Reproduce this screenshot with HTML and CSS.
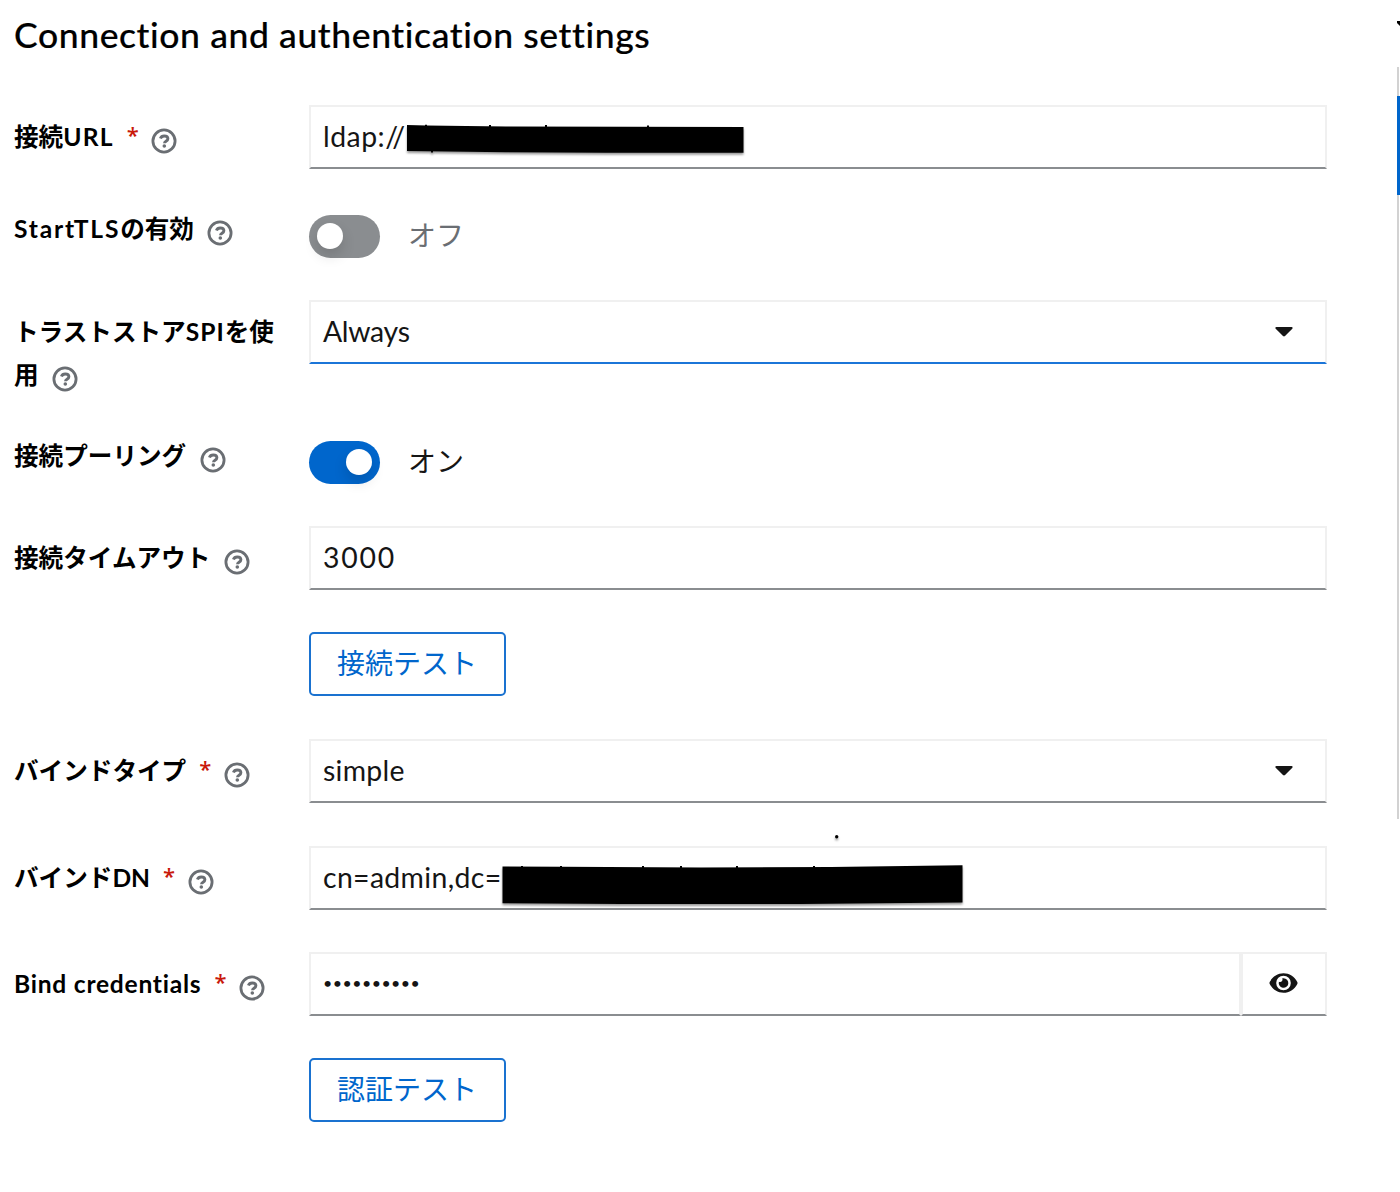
FILE: index.html
```html
<!DOCTYPE html>
<html lang="ja">
<head>
<meta charset="utf-8">
<title>Connection and authentication settings</title>
<link rel="stylesheet" href="styles.css">
</head>
<body>
<svg width="0" height="0" class="defs" aria-hidden="true">
  <symbol id="help" viewBox="0 0 26 26">
    <circle cx="13" cy="13" r="11.1" fill="none" stroke="#6a6e73" stroke-width="2.8"/>
    <path d="M9.4 10.5C10 8.9 11.4 8 13.2 8c2.1 0 3.7 1.1 3.7 2.8 0 2.5-3.4 2.5-3.4 4.4" fill="none" stroke="#6a6e73" stroke-width="2.9"/>
    <circle cx="13.3" cy="18" r="1.8" fill="#6a6e73"/>
  </symbol>
  <symbol id="caret" viewBox="0 0 18 10"><path d="M1.4 0h15.2c1 0 1.4 1 .7 1.7L10 9c-.6.6-1.4.6-2 0L.7 1.7C0 1 .4 0 1.4 0z" fill="#151515"/></symbol>
</svg>
<main class="page">
  <h1 class="title">Connection and authentication settings</h1>
  <form class="form">
    <div class="label">接続<span class="url">URL</span><span class="req">*</span><svg class="help"><use href="#help"/></svg></div>
    <div class="field"><span class="ldap">ldap://</span>
      <svg class="redact redact-url" viewBox="0 0 340 32"><path d="M1 1L20 1.500 100 2.400 337.500 3V28.800H200L100 28.300 1 27Z"/><path d="M19 .8h2v2h-2zM83 1h2v2h-2zM139 1h2v2h-2zM241 1.500h2v2h-2zM25 27h2v1.500h-2z"/></svg>
    </div>

    <div class="label raised"><span class="starttls">StartTLS</span>の有効<svg class="help"><use href="#help"/></svg></div>
    <div class="switch-row off"><span class="switch"></span><span>オフ</span></div>

    <div class="label">トラストストア<span class="spi">SPI</span>を使用<svg class="help"><use href="#help"/></svg></div>
    <div class="field active"><span class="always">Always</span><svg class="caret"><use href="#caret"/></svg></div>

    <div class="label raised">接続プーリング<svg class="help"><use href="#help"/></svg></div>
    <div class="switch-row on"><span class="switch"></span><span>オン</span></div>

    <div class="label">接続タイムアウト<svg class="help"><use href="#help"/></svg></div>
    <div class="field"><span class="timeout">3000</span></div>

    <button type="button" class="test">接続テスト</button>

    <div class="label">バインドタイプ<span class="req">*</span><svg class="help"><use href="#help"/></svg></div>
    <div class="field"><span class="simple">simple</span><svg class="caret"><use href="#caret"/></svg></div>

    <div class="label">バインド<span class="dn">DN</span><span class="req">*</span><svg class="help"><use href="#help"/></svg></div>
    <div class="field"><span class="bind-dn">cn=admin,dc=</span>
      <svg class="redact redact-dn" viewBox="0 0 464 78"><path d="M1.500 36.500L60 36.800 200 37.500 330 37 461.500 35.300V72.500L300 74H120L1.500 73.300Z"/><path d="M20 36h2v2h-2zM59 36h2v2h-2zM141 36h2v2h-2zM179 36h2v2h-2zM235 36h2v2h-2zM312 36h2v2h-2z"/><circle cx="335.700" cy="6.700" r="1.700"/></svg>
    </div>

    <div class="label"><span class="bind">Bind credentials</span><span class="req">*</span><svg class="help"><use href="#help"/></svg></div>
    <div class="password">
      <div class="field"><span class="dots">••••••••••</span></div>
      <div class="field reveal"><svg viewBox="0 0 28 20" width="29" height="20"><path fill="#151515" fill-rule="evenodd" d="M14 .3C8.300.3 3 3.500.2 9.100c-.3.600-.3 1.200 0 1.800C3 16.500 8.300 19.700 14 19.700s11-3.200 13.800-8.800c.3-.6.3-1.200 0-1.800C25 3.500 19.700.3 14 .3zM14 2.700a7.300 7.300 0 1 1 0 14.600 7.300 7.300 0 0 1 0-14.600z"/><path fill="#151515" d="M14 5.200c-.5 0-.9.100-1.300.2a2.400 2.400 0 0 1-3.300 3.300A4.800 4.800 0 1 0 14 5.200z"/></svg></div>
    </div>

    <button type="button" class="test">認証テスト</button>
  </form>
  <svg class="close-edge" viewBox="0 0 3 5"><path d="M0 0h3v5L0 2z"/></svg>
  <div class="track"><div class="thumb"></div></div>
</main>
</body>
</html>
```
FILE: styles.css
```css
* { box-sizing: border-box; }
body {
  margin: 0;
  background: #fff;
  color: #151515;
  font-family: Lato, "Noto Sans CJK JP", sans-serif;
  font-variant-ligatures: none;
}
.defs { display: block; }
.page {
  position: relative;
  height: 1192px;
  overflow: hidden;
  padding: 13px 73px 0 14px;
}
.title {
  margin: 0;
  height: 92px;
  color: #000;
  font-size: 35.5px;
  font-weight: 500;
  letter-spacing: .6px;
  line-height: 44px;
  white-space: nowrap;
  -webkit-text-stroke: .2px #000;
}
.form {
  display: grid;
  grid-template-columns: 266px 1017.5px;
  grid-template-rows: 64px 47px 96px 46px 64px 65px 65px 64px 64px 64px;
  gap: 42px 29px;
}
.label {
  padding-top: 10px;
  color: #000;
  font-size: 24.6px;
  font-weight: 700;
  line-height: 43px;
}
.raised { margin-top: -4px; padding-top: 0; }
.url { letter-spacing: 1.2px; }
.starttls { letter-spacing: 1.8px; }
.spi { letter-spacing: 1px; }
.bind { letter-spacing: .75px; }
.req {
  margin-left: 13px;
  color: #c9190b;
  font-family: "Open Sans", sans-serif;
  font-size: 22px;
  font-weight: 600;
  line-height: 1;
  vertical-align: 3px;
}
.help { width: 26px; height: 26px; margin-left: 13.5px; vertical-align: -8px; }
.req + .help { margin-left: 12.5px; }
.field {
  position: relative;
  display: flex;
  align-items: center;
  justify-content: space-between;
  height: 64px;
  padding: 0 32px 2px 12px;
  border: 2px solid #f0f0f0;
  border-bottom-color: #8a8d90;
  font-size: 28.4px;
  line-height: 40px;
  white-space: nowrap;
}
.active { border-bottom-color: #1b75d8; }
.ldap { letter-spacing: .5px; }
.always { letter-spacing: -.3px; }
.timeout { letter-spacing: 1.8px; }
.simple { letter-spacing: .3px; }
.bind-dn { letter-spacing: .35px; }
.dots { font-size: 16px; letter-spacing: .45px; }
.caret { width: 18px; height: 10px; position: relative; top: 1px; }
.switch-row {
  display: flex;
  align-items: center;
  gap: 28px;
  height: 42px;
  margin-top: 4px;
  font-size: 28px;
  line-height: 40px;
}
.switch-row > :last-child { margin-top: -2px; }
.on { margin-top: 3px; }
.switch {
  display: flex;
  align-items: center;
  width: 71px;
  height: 43px;
  padding: 0 8px;
  border-radius: 22px;
  background: #8a8d90;
}
.switch::before {
  content: "";
  width: 26px;
  height: 26px;
  border-radius: 50%;
  background: #fff;
  box-shadow: 0 7px 14px rgba(3, 3, 3, .14);
}
.off { color: #6a6e73; }
.on .switch { justify-content: flex-end; background: #06c; }
.test {
  grid-column: 2;
  justify-self: start;
  width: 197px;
  height: 64px;
  padding: 0 1px 4px 0;
  border: 2px solid #1a72d0;
  border-radius: 5px;
  background: #fff;
  color: #06c;
  font-family: inherit;
  font-size: 28px;
}
.password { display: grid; grid-template-columns: 932px 85.5px; }
.reveal { justify-content: center; padding: 0 1px 2px 0; }
.redact { position: absolute; fill: #000; filter: drop-shadow(0 2px 1px rgba(0, 0, 0, .4)); overflow: visible; }
.redact-url { left: 95px; top: 17px; width: 340px; height: 32px; }
.redact-dn { left: 190px; top: -18px; width: 464px; height: 78px; }
.close-edge { position: absolute; right: 0; top: 21px; width: 3px; height: 5px; }
.track {
  position: absolute;
  left: 1397px;
  top: 67px;
  width: 3px;
  height: 752px;
  padding-top: 29px;
  background: linear-gradient(90deg, #d2d2d2 2px, #fff 2px);
}
.thumb { height: 99px; background: #06c; }
```
